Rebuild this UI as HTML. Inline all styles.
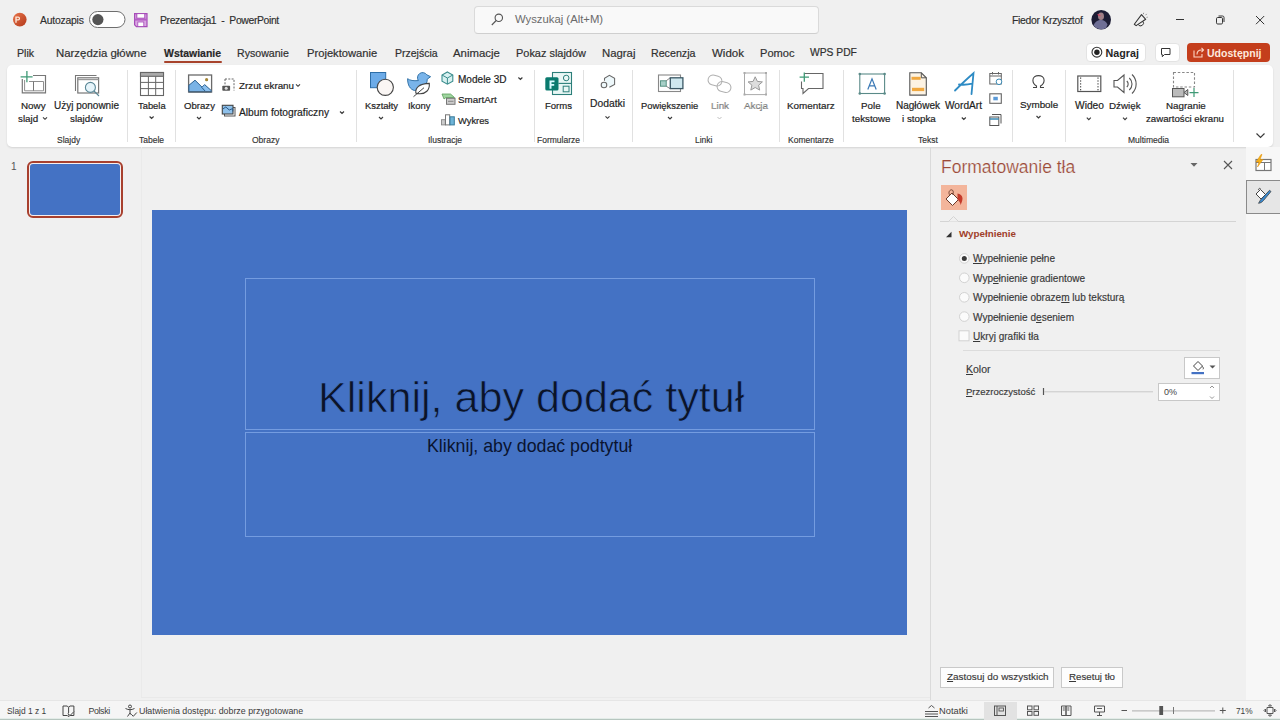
<!DOCTYPE html>
<html><head><meta charset="utf-8">
<style>
*{margin:0;padding:0;box-sizing:border-box}
html,body{width:1280px;height:720px;overflow:hidden;background:#f0f0f0;font-family:"Liberation Sans",sans-serif;color:#333}
.a{position:absolute;white-space:nowrap}
.t{position:absolute;white-space:nowrap;line-height:14px;height:14px}
.rb{font-size:9.8px;color:#1f1f1f;-webkit-text-stroke:0.2px #1f1f1f}
.gl{font-size:8.5px;color:#333;-webkit-text-stroke:0.15px #333}
.tab{font-size:11px;color:#303030;-webkit-text-stroke:0.2px #303030}
.dv{position:absolute;width:1px;background:#e1e1e1;top:70px;height:72px}
.chev{position:absolute;width:5px;height:5px;border-right:1px solid #555;border-bottom:1px solid #555;transform:rotate(45deg)}
svg{position:absolute;overflow:visible}
</style></head><body>

<!-- ============ TITLE BAR ============ -->
<div class="a" id="titlebar" style="left:0;top:0;width:1280px;height:38px;background:#f0f0f0"></div>
<div class="t" style="left:40px;top:13.5px;font-size:10.4px;letter-spacing:-0.22px;color:#2e2e2e;-webkit-text-stroke:0.15px #2e2e2e">Autozapis</div>
<div class="t" style="left:160px;top:13.5px;font-size:10.4px;letter-spacing:-0.37px;color:#2e2e2e;-webkit-text-stroke:0.15px #2e2e2e;white-space:pre">Prezentacja1  -  PowerPoint</div>
<div class="a" style="left:474px;top:6px;width:345px;height:28px;background:#f9f9f9;border:1px solid #dadada;border-bottom-color:#cfcfcf;border-radius:4px"></div>
<div class="t" style="left:515px;top:12px;font-size:11.3px;color:#6b6b6b">Wyszukaj (Alt+M)</div>
<div class="t" style="left:1012px;top:13.5px;font-size:10.4px;letter-spacing:-0.28px;color:#2e2e2e;-webkit-text-stroke:0.15px #2e2e2e">Fiedor Krzysztof</div>

<!-- ============ TABS ============ -->
<div class="t tab" style="left:17px;top:46px;font-size:10.6px">Plik</div>
<div class="t tab" style="left:56px;top:46px;font-size:11.4px">Narzędzia główne</div>
<div class="t tab" style="left:164px;top:47px;font-size:10.47px;font-weight:bold;color:#262626">Wstawianie</div>
<div class="a" style="left:163.5px;top:61px;width:58.5px;height:2.2px;background:#a8432c;border-radius:1px"></div>
<div class="t tab" style="left:237px;top:46px;font-size:10.6px">Rysowanie</div>
<div class="t tab" style="left:307px;top:46px;font-size:11.2px">Projektowanie</div>
<div class="t tab" style="left:395px;top:46px;font-size:10.5px">Przejścia</div>
<div class="t tab" style="left:453px;top:46px;font-size:11.4px">Animacje</div>
<div class="t tab" style="left:516px;top:46px;font-size:10.95px">Pokaz slajdów</div>
<div class="t tab" style="left:602px;top:46px;font-size:11.37px">Nagraj</div>
<div class="t tab" style="left:651px;top:46px;font-size:10.67px">Recenzja</div>
<div class="t tab" style="left:712px;top:46px;font-size:11.5px">Widok</div>
<div class="t tab" style="left:760px;top:46px;font-size:11.08px">Pomoc</div>
<div class="t tab" style="left:810px;top:46px;font-size:10.3px">WPS PDF</div>

<!-- buttons right -->
<div class="a" style="left:1086px;top:43px;width:60px;height:19px;background:#fff;border:1px solid #e3e3e3;border-radius:4px"></div>
<div class="t" style="left:1105.5px;top:46px;font-size:10.73px;font-weight:bold;color:#262626">Nagraj</div>
<div class="a" style="left:1155px;top:43px;width:25px;height:19px;background:#fff;border:1px solid #e3e3e3;border-radius:4px"></div>
<div class="a" style="left:1187px;top:43px;width:83px;height:19px;background:#c43e1c;border-radius:4px"></div>
<div class="t" style="left:1207px;top:46px;font-size:10.55px;font-weight:bold;color:#fde8dc">Udostępnij</div>

<!-- ============ RIBBON ============ -->
<div class="a" id="ribbon" style="left:6.5px;top:65px;width:1266.5px;height:82px;background:#fff;border-radius:5px;box-shadow:0 1px 2px rgba(0,0,0,.12)"></div>

<div class="dv" style="left:127px"></div>
<div class="dv" style="left:175px"></div>
<div class="dv" style="left:356px"></div>
<div class="dv" style="left:534px"></div>
<div class="dv" style="left:583px"></div>
<div class="dv" style="left:632px"></div>
<div class="dv" style="left:779px"></div>
<div class="dv" style="left:843px"></div>
<div class="dv" style="left:1012px"></div>
<div class="dv" style="left:1065px"></div>
<div class="dv" style="left:1233px"></div>

<div class="t rb" style="left:21px;top:99px;font-size:9.84px">Nowy</div>
<div class="t rb" style="left:18px;top:112px">slajd</div>
<div class="t rb" style="left:54px;top:99px;font-size:9.99px">Użyj ponownie</div>
<div class="t rb" style="left:70px;top:112px">slajdów</div>
<div class="t gl" style="left:57px;top:133px">Slajdy</div>

<div class="t rb" style="left:138px;top:99px;font-size:9.4px">Tabela</div>
<div class="t gl" style="left:139px;top:133px">Tabele</div>

<div class="t rb" style="left:184px;top:99px;font-size:9.62px">Obrazy</div>
<div class="t rb" style="left:239px;top:79px">Zrzut ekranu</div>
<div class="t rb" style="left:239px;top:106px;font-size:10.25px">Album fotograficzny</div>
<div class="t gl" style="left:252px;top:133px">Obrazy</div>

<div class="t rb" style="left:365px;top:99px;font-size:9.43px">Kształty</div>
<div class="t rb" style="left:408px;top:99px;font-size:9.41px">Ikony</div>
<div class="t rb" style="left:458px;top:73px;font-size:10.05px">Modele 3D</div>
<div class="t rb" style="left:458px;top:93px">SmartArt</div>
<div class="t rb" style="left:458px;top:114px;font-size:9.33px">Wykres</div>
<div class="t gl" style="left:428px;top:133px">Ilustracje</div>

<div class="t rb" style="left:545px;top:99px;font-size:9.53px">Forms</div>
<div class="t gl" style="left:537px;top:133px">Formularze</div>

<div class="t rb" style="left:590px;top:97px;font-size:10.32px">Dodatki</div>

<div class="t rb" style="left:641px;top:99px;font-size:9.4px">Powiększenie</div>
<div class="t rb" style="left:711px;top:99px;color:#b8b8b8">Link</div>
<div class="t rb" style="left:744px;top:99px;color:#b8b8b8">Akcja</div>
<div class="t gl" style="left:695px;top:133px">Linki</div>

<div class="t rb" style="left:787px;top:99px;font-size:9.89px">Komentarz</div>
<div class="t gl" style="left:788px;top:133px">Komentarze</div>

<div class="t rb" style="left:861px;top:99px">Pole</div>
<div class="t rb" style="left:852px;top:112px;font-size:9.78px">tekstowe</div>
<div class="t rb" style="left:896px;top:99px;font-size:10.02px">Nagłówek</div>
<div class="t rb" style="left:902px;top:112px">i stopka</div>
<div class="t rb" style="left:945px;top:99px;font-size:10.14px">WordArt</div>
<div class="t gl" style="left:918px;top:133px">Tekst</div>

<div class="t rb" style="left:1020px;top:98px;font-size:9.84px">Symbole</div>

<div class="t rb" style="left:1075px;top:99px;font-size:10.23px">Wideo</div>
<div class="t rb" style="left:1109px;top:99px">Dźwięk</div>
<div class="t rb" style="left:1166px;top:99px;font-size:9.81px">Nagranie</div>
<div class="t rb" style="left:1146px;top:112px;font-size:9.68px">zawartości ekranu</div>
<div class="t gl" style="left:1128px;top:133px">Multimedia</div>

<!-- ============ LEFT PANEL ============ -->
<div class="t" style="left:11px;top:160px;font-size:10px;color:#555">1</div>
<div class="a" style="left:27px;top:161px;width:96px;height:57px;border:2px solid #a8402e;border-radius:6px;background:#f6eeee"></div>
<div class="a" style="left:30px;top:164px;width:90px;height:51px;background:#4472c4;border-radius:3px"></div>

<!-- ============ SLIDE ============ -->
<div class="a" style="left:141px;top:147px;width:1px;height:551px;background:#eaeaea"></div>
<div class="a" style="left:141px;top:697px;width:789px;height:1px;background:#e9e9e9"></div>
<div class="a" style="left:152px;top:210px;width:755px;height:425px;background:#4472c4"></div>
<div class="a" style="left:245px;top:278px;width:570px;height:152px;border:1px solid #749ce0"></div>
<div class="a" style="left:245px;top:432px;width:570px;height:105px;border:1px solid #749ce0"></div>
<div class="a" style="left:318px;top:372px;font-size:43.1px;line-height:50px;color:#0b1428;-webkit-text-stroke:0.7px #4472c4">Kliknij, aby dodać tytuł</div>
<div class="a" style="left:427px;top:436px;font-size:17.76px;line-height:20px;color:#0a1430">Kliknij, aby dodać podtytuł</div>

<!-- ============ FORMAT PANE ============ -->
<div class="a" style="left:930px;top:147px;width:1px;height:553px;background:#dadada"></div>
<div class="a" style="left:1246px;top:147px;width:34px;height:553px;background:#f7f7f7"></div>
<div class="a" style="left:941px;top:156px;font-size:17.5px;line-height:22px;color:#9c4a37;-webkit-text-stroke:0.2px #f0f0f0">Formatowanie tła</div>
<div class="a" style="left:941px;top:185px;width:26px;height:25px;background:#f3b59b"></div>
<div class="a" style="left:940px;top:221px;width:296px;height:1px;background:#d4d4d4"></div>
<svg width="20" height="10" style="left:944px;top:214px"><path d="M0 7.5h4.5l5-5l5 5h5.5" fill="#f0f0f0" stroke="#d4d4d4" stroke-width="1"/><rect x="0" y="8" width="20" height="2" fill="#f0f0f0"/></svg>
<div class="t" style="left:959px;top:227px;font-size:9.8px;font-weight:bold;color:#a0402a">Wypełnienie</div>

<div class="t" style="left:973px;top:252px;font-size:10.05px;color:#383838;-webkit-text-stroke:0.15px #383838"><u>W</u>ypełnienie pełne</div>
<div class="t" style="left:973px;top:272px;font-size:10.05px;color:#383838;-webkit-text-stroke:0.15px #383838">Wyp<u>e</u>łnienie gradientowe</div>
<div class="t" style="left:973px;top:291px;font-size:10.05px;color:#383838;-webkit-text-stroke:0.15px #383838">Wypełnienie obraze<u>m</u> lub teksturą</div>
<div class="t" style="left:973px;top:311px;font-size:10.05px;color:#383838;-webkit-text-stroke:0.15px #383838">Wypełnienie d<u>e</u>seniem</div>
<div class="t" style="left:973px;top:330px;font-size:10.05px;color:#383838;-webkit-text-stroke:0.15px #383838"><u>U</u>kryj grafiki tła</div>
<div class="a" style="left:963px;top:350px;width:257px;height:1px;background:#dcdcdc"></div>
<div class="t" style="left:966px;top:362px;font-size:10.5px;color:#383838;-webkit-text-stroke:0.15px #383838"><u>K</u>olor</div>
<div class="t" style="left:966px;top:385px;font-size:9.5px;color:#383838;-webkit-text-stroke:0.15px #383838"><u>P</u>rzezroczystość</div>
<div class="a" style="left:1184px;top:357px;width:36px;height:22px;background:#fff;border:1px solid #c8c8c8"></div>
<div class="a" style="left:1158px;top:383px;width:62px;height:18px;background:#fff;border:1px solid #c8c8c8"></div>
<div class="t" style="left:1164px;top:385px;font-size:9px;color:#444">0%</div>

<div class="a" style="left:940px;top:667px;width:114px;height:21px;background:#fdfdfd;border:1px solid #c9c9c9"></div>
<div class="t" style="left:947px;top:670px;font-size:9.95px;color:#383838;-webkit-text-stroke:0.15px #383838"><u>Z</u>astosuj do wszystkich</div>
<div class="a" style="left:1061px;top:667px;width:62px;height:21px;background:#fdfdfd;border:1px solid #c9c9c9"></div>
<div class="t" style="left:1069px;top:670px;font-size:9.74px;color:#383838;-webkit-text-stroke:0.15px #383838"><u>R</u>esetuj tło</div>

<!-- ============ STATUS BAR ============ -->
<div class="a" style="left:0;top:700px;width:1280px;height:20px;background:#f5f5f5;border-top:1px solid #e6e6e6"></div>
<div class="a" style="left:0;top:718px;width:1280px;height:1px;background:#e3ece8"></div>
<div class="a" style="left:0;top:719px;width:1280px;height:1px;background:#b6c6bf"></div>
<div class="t" style="left:7px;top:704px;font-size:8.4px;color:#3c3c3c">Slajd 1 z 1</div>
<div class="t" style="left:88.5px;top:704px;font-size:8.8px;letter-spacing:-0.37px;color:#3c3c3c">Polski</div>
<div class="t" style="left:139px;top:704px;font-size:8.85px;color:#3c3c3c">Ułatwienia dostępu: dobrze przygotowane</div>
<div class="t" style="left:939px;top:704px;font-size:9.3px;color:#3c3c3c">Notatki</div>
<div class="a" style="left:984px;top:702px;width:33px;height:18px;background:#e2e2e2"></div>
<div class="t" style="left:1236px;top:704px;font-size:8.3px;color:#3c3c3c">71%</div>


<!-- ============ ICONS OVERLAY ============ -->
<svg width="1280" height="720" viewBox="0 0 1280 720" style="left:0;top:0;pointer-events:none">
<defs>
<linearGradient id="ppg" x1="0" y1="0" x2="1" y2="1"><stop offset="0" stop-color="#e8744a"/><stop offset="1" stop-color="#b3391b"/></linearGradient>
</defs>
<!-- title bar -->
<circle cx="19.8" cy="19.6" r="6.8" fill="url(#ppg)"/>
<path d="M15.3 16.6h2.9a1.9 1.9 0 0 1 0 3.8h-1.5v2.3h-1.4z M16.7 17.8v1.5h1.4a.75.75 0 0 0 0-1.5z" fill="#fde5d6" fill-rule="evenodd"/>
<rect x="89.5" y="11.5" width="35.5" height="16" rx="8" fill="#fff" stroke="#6e6e6e" stroke-width="1"/>
<circle cx="97.9" cy="19.6" r="5.6" fill="#555"/>
<path d="M134.6 13.6h12.4v13h-10.6l-1.8-1.8z" fill="#d9a6e2" stroke="#a64bb8" stroke-width="1.2"/>
<rect x="136.8" y="13.6" width="8" height="4.6" fill="#fff" stroke="#a64bb8" stroke-width="1"/>
<rect x="134.6" y="18.6" width="12.4" height="2" fill="#b55fc6"/>
<rect x="137.8" y="22" width="6" height="4.4" fill="#fff" stroke="#a64bb8" stroke-width=".8"/>
<circle cx="498.8" cy="17.8" r="3.7" fill="none" stroke="#555" stroke-width="1.1"/>
<path d="M496.2 20.5L491.8 25" stroke="#555" stroke-width="1.1"/>
<circle cx="1101.2" cy="19.7" r="9.8" fill="#1d1d35"/>
<path d="M1093.5 25.5c1.5-4 4.5-5.5 7.5-5.5s5.5 2 6.5 4.5l-1.5 3.5a9.8 9.8 0 0 1-12.5-2.5z" fill="#6f6f96"/>
<ellipse cx="1101" cy="16.2" rx="3" ry="3.8" fill="#a08088"/>
<path d="M1097.6 14.5l2.8 1.2" stroke="#e04060" stroke-width="1.2"/>
<path d="M1134.3 24.3L1141.5 14.6L1145.7 19.3L1136.1 25.6Z" fill="none" stroke="#333" stroke-width="1.05" stroke-linejoin="round"/>
<path d="M1138.2 24.6A2.6 2.6 0 0 0 1143 21.4" fill="none" stroke="#333" stroke-width="1"/>
<path d="M1143.3 14.2l.4-1.4 M1145.6 15.2l1.1-1.3 M1146.5 17.4l1.2-.2" stroke="#777" stroke-width=".8"/>
<path d="M1176 19.5h8" stroke="#333" stroke-width="1"/>
<rect x="1216.5" y="17.5" width="6" height="6.5" rx="1.2" fill="none" stroke="#333" stroke-width="1"/>
<path d="M1218.5 16h4a1.5 1.5 0 0 1 1.5 1.5v4.5" fill="none" stroke="#333" stroke-width="1"/>
<path d="M1256 16l8.2 8.2M1264.2 16L1256 24.2" stroke="#333" stroke-width="1"/>
<!-- tab row buttons -->
<circle cx="1096.9" cy="52.2" r="4.9" fill="none" stroke="#333" stroke-width="1.1"/>
<circle cx="1096.9" cy="52.2" r="2.7" fill="#222"/>
<path d="M1161.5 48.5h8.5v6h-5.5l-2.2 2.2v-2.2h-.8z" fill="none" stroke="#333" stroke-width="1"/>
<path d="M1194 50.5v6.5h8v-3 M1197 54.5c0-3 2-4.5 4.5-4.5h1.5 M1201.5 47.8l2 2.2l-2 2.2" fill="none" stroke="#fbd5c5" stroke-width="1.1"/>

<!-- chevrons -->
<g fill="none" stroke="#3a3a3a" stroke-width="1.15">
<path d="M43 117.3l2 2l2-2"/>
<path d="M149.6 116.5l2 2l2-2"/>
<path d="M197 117l2 2l2-2"/>
<path d="M296 84.3l2 2l2-2"/>
<path d="M340 111.5l2 2l2-2"/>
<path d="M379 117l2 2l2-2"/>
<path d="M518.4 77.5l2 2l2-2"/>
<path d="M605.5 116.3l2 2l2-2"/>
<path d="M668 117l2 2l2-2"/>
<path d="M961.8 117.5l2 2l2-2"/>
<path d="M1036.5 116l2 2l2-2"/>
<path d="M1086.8 117.6l2 2l2-2"/>
<path d="M1123 117.6l2 2l2-2"/>
<path d="M1256.5 133.5l4 4l4-4"/>
</g>
<path d="M717.5 117l2 2l2-2" fill="none" stroke="#c0c0c0" stroke-width="1"/>

<!-- Nowy slajd -->
<path d="M33 75.5H45.5V92.8H22.3V79" fill="none" stroke="#777" stroke-width="1.2"/>
<path d="M29 81.5H43.5V90.8H24.6V80" fill="none" stroke="#888" stroke-width=".95"/>
<path d="M33.5 81.5v9.3" stroke="#777" stroke-width="1"/>
<path d="M26.9 70.9v11.3M20.6 76.8h12" stroke="#3f9a76" stroke-width="1.3"/>
<!-- Uzyj ponownie -->
<path d="M75.5 91V75.5h21" fill="none" stroke="#777" stroke-width="1.1"/>
<rect x="77.8" y="77.8" width="20.8" height="15.2" fill="none" stroke="#777" stroke-width="1.2"/>
<path d="M77.8 79.6h20.8" stroke="#999" stroke-width="1.2"/>
<circle cx="90.4" cy="87.4" r="5" fill="#e6f4fa" stroke="#5a8796" stroke-width="1.1"/>
<path d="M94 91l5 5" stroke="#5a8796" stroke-width="1.1"/>
<!-- Tabela -->
<rect x="140.5" y="72.5" width="23" height="23" fill="#fff" stroke="#666" stroke-width="1.1"/>
<rect x="140.5" y="72.5" width="23" height="3.8" fill="#aaa" stroke="#666" stroke-width="1.1"/>
<path d="M148.4 76.3v19.2M155.7 76.3v19.2M140.5 82.4h23M140.5 88.6h23" stroke="#666" stroke-width="1"/>
<!-- Obrazy -->
<rect x="188.6" y="75" width="23" height="17" fill="#fff" stroke="#6a6a6a" stroke-width="1.3"/>
<path d="M188.9 85.3L195 80.2L206.5 91.6H188.9Z" fill="#7ab3e6" stroke="#2b5f8e" stroke-width="1"/>
<path d="M201.8 87.4L204.6 84.6L211.3 90.6V91.6H205.6Z" fill="#8cc0ee" stroke="#2b5f8e" stroke-width="1"/>
<path d="M188.6 92h23" stroke="#5a6a7a" stroke-width="1.2"/>
<circle cx="206.6" cy="79.7" r="1.6" fill="#a58636"/>
<!-- Zrzut ekranu -->
<path d="M225 79h9v11.5" fill="none" stroke="#666" stroke-width="1" stroke-dasharray="2 1.3"/>
<path d="M225 79v6" fill="none" stroke="#666" stroke-width="1" stroke-dasharray="2 1.3"/>
<rect x="222.3" y="85.8" width="7.8" height="5" rx=".8" fill="#555"/>
<circle cx="226.2" cy="88.3" r="1.5" fill="#ddd"/>
<!-- Album -->
<rect x="224.5" y="107.5" width="10.5" height="8.5" fill="none" stroke="#555" stroke-width="1"/>
<rect x="222.3" y="105.3" width="10.7" height="8.7" fill="#8ec0ea" stroke="#444" stroke-width="1.1"/>
<path d="M222.8 109l3-2l3.5 3l3.5-1.5v3" fill="none" stroke="#2a5a88" stroke-width="1"/>
<!-- Ksztalty -->
<rect x="370.5" y="72.5" width="15.2" height="15.2" fill="#6cabe8" stroke="#2d6ea8" stroke-width="1"/>
<circle cx="385.3" cy="87.3" r="8.1" fill="#faf6f4" stroke="#444" stroke-width="1.1"/>
<!-- Ikony -->
<path d="M407.6 78.7C410 80.5 413.5 81 418.4 80.6A5 5 0 1 1 426.8 74.8L430.6 76.7L427.2 79.2C427.5 85 422 90.5 414.6 90.5C410 89.5 407.6 85 407.6 78.7Z" fill="#79b4ea" stroke="#3373a8" stroke-width="1"/>
<path d="M415.8 93c-.5-5 3-9.3 13.5-9.6c.6 7-4 10.5-9.5 10.4c-2.2 0-3.5-.4-4-.8z" fill="#fff" stroke="#444" stroke-width="1.1"/>
<path d="M413.5 96.7l10.5-9" stroke="#444" stroke-width="1"/>
<!-- Modele 3D -->
<path d="M447.4 72l5.4 3v6.2l-5.4 3l-5.4-3v-6.2z" fill="#d8f1f1" stroke="#3a8c8c" stroke-width="1.1"/>
<path d="M442 75l5.4 3l5.4-3M447.4 78v6" fill="none" stroke="#3a8c8c" stroke-width="1"/>
<!-- SmartArt -->
<path d="M442 94h8.5l4 3.5h-8.5l-2 1.5z" fill="#9fd49f" stroke="#5aa05a" stroke-width=".8"/>
<rect x="446.5" y="98.3" width="8.5" height="6" fill="#ccc" stroke="#777" stroke-width="1"/>
<path d="M448 101.3h5.5" stroke="#888" stroke-width="1"/>
<!-- Wykres -->
<rect x="441.5" y="119.7" width="3.8" height="5.2" fill="#ccc" stroke="#888" stroke-width=".9"/>
<rect x="445.5" y="114.8" width="4.2" height="10.1" fill="#fff" stroke="#777" stroke-width="1"/>
<rect x="450" y="116.8" width="4.3" height="8.1" fill="#6eb4d8" stroke="#3a7a9a" stroke-width="1"/>
<!-- Forms -->
<rect x="552.5" y="72.5" width="19" height="22" fill="#e9f7f5" stroke="#2c7f7a" stroke-width="1.1"/>
<path d="M558.4 83.4h13" stroke="#2c7f7a" stroke-width="1.1"/>
<circle cx="566.2" cy="78" r="2.8" fill="none" stroke="#2c7f7a" stroke-width="1"/>
<rect x="563.2" y="86.2" width="5.8" height="5.6" fill="none" stroke="#2c7f7a" stroke-width="1"/>
<rect x="545.3" y="77.2" width="13.2" height="13.3" rx="1.5" fill="#0a7a6e"/>
<path d="M549.5 80.5h5v1.8h-3v1.8h2.7v1.7h-2.7v3h-2z" fill="#d7fbff"/>
<!-- Dodatki -->
<path d="M604.5 80.8v-2.5l4.9-2.9l5.2 3v6l-5.2 2.9" fill="#eef8fb" stroke="#666" stroke-width="1.05"/>
<circle cx="604" cy="85" r="2.8" fill="#eef8fb" stroke="#666" stroke-width="1.05"/>
<!-- Powiekszenie -->
<rect x="658.5" y="75" width="22" height="16.5" fill="#fff" stroke="#888" stroke-width="1.1"/>
<rect x="660.4" y="80.8" width="5.8" height="5.4" fill="#a8d0c8" stroke="#4a8a7a" stroke-width=".9"/>
<path d="M666.2 80.8l4-3M666.2 86.2l4 2.5" stroke="#666" stroke-width=".8"/>
<rect x="670.3" y="77.8" width="12.6" height="10.8" fill="#cfe8ef" stroke="#3b5865" stroke-width="1.3"/>
<!-- Link -->
<g fill="none" stroke="#b0b0b0" stroke-width="1">
<rect x="708" y="75.5" width="14" height="10" rx="5" transform="rotate(15 715 80.5)"/>
<rect x="717" y="82" width="14" height="10" rx="5" transform="rotate(15 724 87)"/>
</g>
<!-- Akcja -->
<rect x="744.5" y="73" width="21.6" height="21.6" fill="none" stroke="#aaa" stroke-width="1"/>
<g fill="#aaa"><rect x="743.5" y="72" width="2" height="2"/><rect x="765" y="72" width="2" height="2"/><rect x="743.5" y="93.5" width="2" height="2"/><rect x="765" y="93.5" width="2" height="2"/></g>
<path d="M755.2 76.8l2.2 4.6l5 .5l-3.8 3.3l1.1 4.9l-4.5-2.6l-4.4 2.6l1.1-4.9l-3.8-3.3l5-.5z" fill="#ddd" stroke="#999" stroke-width="1"/>
<!-- Komentarz -->
<path d="M805 73.5h18v15h-14.5l-5.5 5v-5h-1.5v-7" fill="none" stroke="#666" stroke-width="1.1"/>
<path d="M804.3 72.5v9.3M799.6 77.1h9.4" stroke="#3f9a76" stroke-width="1.3"/>
<!-- Pole tekstowe -->
<rect x="859.8" y="74" width="24.8" height="19.5" fill="#fff" stroke="#5a8a88" stroke-width="1.1"/>
<g fill="#5a8a88"><circle cx="859.8" cy="74" r="1.3"/><circle cx="884.6" cy="74" r="1.3"/><circle cx="859.8" cy="93.5" r="1.3"/><circle cx="884.6" cy="93.5" r="1.3"/></g>
<path d="M867.8 89.5l4.2-10.6l4.2 10.6M869.3 85.8h5.4" fill="none" stroke="#3a78b5" stroke-width="1.2"/>
<!-- Naglowek i stopka -->
<path d="M909.8 72.8h11.5l5 5v17.3h-16.5z" fill="#fdf3e3" stroke="#555" stroke-width="1.1"/>
<path d="M921.3 72.8v5h5" fill="none" stroke="#555" stroke-width="1"/>
<rect x="911.5" y="76.8" width="9.2" height="3" fill="#f0a840"/>
<rect x="912" y="87.8" width="12.2" height="3.3" fill="#f0a840"/>
<!-- WordArt -->
<path d="M955 90.5c5-5 11-11 18.5-17.3l-2 21M959 84.5c4 .5 9 .2 13.2-.8" fill="none" stroke="#2e8bc4" stroke-width="1.8" stroke-linecap="round"/>
<!-- small text icons -->
<rect x="989.8" y="73.5" width="11.5" height="10.5" fill="#fff" stroke="#666" stroke-width="1"/>
<path d="M989.8 76h11.5M992.5 72v2.5M998.5 72v2.5" stroke="#666" stroke-width="1"/>
<circle cx="999" cy="81.8" r="2.8" fill="#fff" stroke="#3a8ab5" stroke-width="1"/>
<rect x="989.8" y="93.8" width="11.5" height="9.5" fill="#fff" stroke="#666" stroke-width="1.1"/>
<rect x="993.3" y="96.8" width="4.5" height="3.5" fill="#5a9ad8"/>
<rect x="989.8" y="117" width="9" height="8.5" fill="#fff" stroke="#555" stroke-width="1"/>
<path d="M992 114.5h9v9" fill="none" stroke="#555" stroke-width="1"/>
<path d="M989.8 119h9" stroke="#3a8ab5" stroke-width="1.5"/>
<!-- Symbole -->
<path d="M1033 87.5h3.5v-1.5c-2.2-1.3-3.6-3.5-3.6-5.8c0-3 2.7-4.6 5.6-4.6s5.6 1.6 5.6 4.6c0 2.3-1.4 4.5-3.6 5.8v1.5h3.5" fill="none" stroke="#444" stroke-width="1.1"/>
<!-- Wideo -->
<rect x="1077.8" y="76" width="23" height="15.5" fill="#fff" stroke="#555" stroke-width="1.2"/>
<g fill="#444"><rect x="1080" y="77.5" width="1.2" height="1.2"/><rect x="1080" y="80.4" width="1.2" height="1.2"/><rect x="1080" y="83.3" width="1.2" height="1.2"/><rect x="1080" y="86.2" width="1.2" height="1.2"/><rect x="1080" y="89.1" width="1.2" height="1.2"/><rect x="1097.4" y="77.5" width="1.2" height="1.2"/><rect x="1097.4" y="80.4" width="1.2" height="1.2"/><rect x="1097.4" y="83.3" width="1.2" height="1.2"/><rect x="1097.4" y="86.2" width="1.2" height="1.2"/><rect x="1097.4" y="89.1" width="1.2" height="1.2"/></g>
<!-- Dzwiek -->
<path d="M1114 80.5h3.5l6.5-5.5v17.5l-6.5-5.5h-3.5z" fill="#fff" stroke="#555" stroke-width="1.1"/>
<path d="M1126.8 81a4 4 0 0 1 0 6 M1129.3 78a8 8 0 0 1 0 12 M1132 74.5a13 13 0 0 1 0 19" fill="none" stroke="#555" stroke-width="1.1"/>
<!-- Nagranie zawartosci ekranu -->
<rect x="1173.5" y="72.5" width="21" height="14.5" fill="none" stroke="#888" stroke-width="1.1" stroke-dasharray="2.5 1.8"/>
<rect x="1172.5" y="88.5" width="11.5" height="8.3" fill="#bbb" stroke="#555" stroke-width="1"/>
<path d="M1184 92.5l3.8-3v6z" fill="#bbb" stroke="#555" stroke-width="1"/>
<path d="M1194 88v9M1189.5 92.6h9" stroke="#3f9a76" stroke-width="1.2"/>

<!-- pane header icons -->
<path d="M1190.5 163l3.5 3.8l3.5-3.8z" fill="#666"/>
<path d="M1224 161l8 8M1232 161l-8 8" stroke="#555" stroke-width="1.1"/>
<path d="M946 199l6-6l6.5 6.5l-6 6z" fill="#fff" stroke="#6a3a2a" stroke-width="1"/>
<path d="M949.5 194.8c-1.5-3 .5-5 2-5c1.5 0 2.5 2 1.2 5" fill="none" stroke="#6a3a2a" stroke-width=".9"/>
<path d="M957.5 193.5c2.5 .3 5 2.2 5 5c0 2-.8 3.5-1.8 6.5c-.6-2.4-1.2-3.8-3.2-5.2z" fill="#c43a2a"/>
<!-- section triangle -->
<path d="M946 237.2l5.5-5.5v5.5z" fill="#333"/>
<!-- radios -->
<g fill="#fbfbfb" stroke="#d2d2d2" stroke-width="1">
<circle cx="964.3" cy="258.4" r="4.8"/>
<circle cx="964.3" cy="277.8" r="4.8"/>
<circle cx="964.3" cy="297.3" r="4.8"/>
<circle cx="964.3" cy="316.6" r="4.8"/>
<rect x="959" y="330.8" width="10" height="10"/>
</g>
<circle cx="964.3" cy="258.4" r="2.5" fill="#3a3a3a"/>
<!-- color button icon -->
<path d="M1193.5 366l4.5-4.5l4.5 4.5l-4.5 4.5z" fill="#fff" stroke="#444" stroke-width="1"/>
<path d="M1202.5 366.5c.8 1 1.2 2 .5 2.8" fill="none" stroke="#444" stroke-width="1"/>
<rect x="1191.5" y="372" width="12.5" height="2.2" fill="#4472c4"/>
<path d="M1209.5 365.5h6l-3 3z" fill="#555"/>
<!-- slider -->
<path d="M1043.5 388v7" stroke="#555" stroke-width="1.2"/>
<path d="M1044 391.8h109" stroke="#c8c8c8" stroke-width="1"/>
<path d="M1210 388l2-2l2 2M1210 396.5l2 2l2-2" fill="none" stroke="#888" stroke-width=".9"/>

<!-- sidebar -->
<rect x="1246.5" y="180.5" width="34" height="33" fill="#e6e6e6" stroke="#8a8a8a" stroke-width="1"/>
<rect x="1256" y="159.5" width="15" height="11" fill="#fff" stroke="#777" stroke-width="1.2"/>
<path d="M1256 162.5h15M1264.5 162.5v8" stroke="#777" stroke-width="1"/>
<path d="M1261 154.5l-5 7.5h3l-1.5 5l5.5-7.5h-3l2-5z" fill="#f5b21c" stroke="#e08a00" stroke-width=".5"/>
<path d="M1256 194l4.5-4.5l5 5l-4.5 4.5z" fill="#fff" stroke="#444" stroke-width="1"/>
<path d="M1258.5 190c0-1.5 1-2 2-1.5" fill="none" stroke="#444" stroke-width=".9"/>
<path d="M1271 191.5l-7.5 9c-1.5 1.8-3 2.5-5 2.8c1-1.5 1.5-3 3-4.5l8-8.5z" fill="#3a8ad0" stroke="#444" stroke-width=".8"/>

<!-- status bar -->
<path d="M63 706h4.3l1.3 1.3l1.3-1.3h4v9.5h-4l-1.3 1.3l-1.3-1.3h-4.3z M68.6 707.3v8.2" fill="none" stroke="#444" stroke-width="1"/>
<path d="M68 713.5l2 2l4-4" fill="#fff" stroke="#444" stroke-width="1"/>
<circle cx="130" cy="706.5" r="1.5" fill="none" stroke="#444" stroke-width="1"/>
<path d="M125.5 708.5c1.5.8 3 1.2 4.5 1.2s3-.4 4.5-1.2M130 709.7v3.3l-2.5 3.5M130 713l1.5 2" fill="none" stroke="#444" stroke-width="1"/>
<path d="M131.5 714.5l1.8 1.8l3.5-3.8" fill="none" stroke="#444" stroke-width="1"/>
<path d="M925 711.5h13M925 714h13M925 716.5h13M928.5 708l3-2.5l3 2.5" fill="none" stroke="#555" stroke-width="1"/>
<rect x="994.5" y="706" width="11" height="9.5" fill="none" stroke="#555" stroke-width="1"/>
<path d="M997 706v9.5" stroke="#555" stroke-width="1"/>
<rect x="999" y="708" width="4.5" height="3" fill="none" stroke="#555" stroke-width=".9"/>
<g fill="none" stroke="#555" stroke-width="1">
<rect x="1027.5" y="706" width="4.5" height="3.8"/><rect x="1034" y="706" width="4.5" height="3.8"/>
<rect x="1027.5" y="711.5" width="4.5" height="3.8"/><rect x="1034" y="711.5" width="4.5" height="3.8"/>
<path d="M1061.5 706h4.5v9.5h-4.5z M1066 706h5v9.5h-5z M1062.8 708h2M1062.8 710h2M1067.3 708h2M1067.3 710h2"/>
<path d="M1094.5 706h10v6h-10z M1099.5 712v3.5M1097 715.5h5 M1097 708.5h5"/>
</g>
<path d="M1121.5 710.5h5.5" stroke="#555" stroke-width="1"/>
<path d="M1132 710.8h83" stroke="#bbb" stroke-width="1.2"/>
<rect x="1159.3" y="706" width="3.8" height="9" fill="#555"/>
<path d="M1173.5 707v7" stroke="#777" stroke-width="1"/>
<path d="M1219.8 710.5h6M1222.8 707.5v6" stroke="#555" stroke-width="1"/>
<path d="M1266 710.3h8M1270 706v8.6" stroke="#555" stroke-width="0" />
<path d="M1267 707.5h6v6h-6z M1264 710.5l1.5-1.5v3z M1276 710.5l-1.5-1.5v3z M1270 704.5l-1.5 1.5h3z M1270 716.5l-1.5-1.5h3z" fill="none" stroke="#555" stroke-width="1"/>
</svg>

</body></html>
